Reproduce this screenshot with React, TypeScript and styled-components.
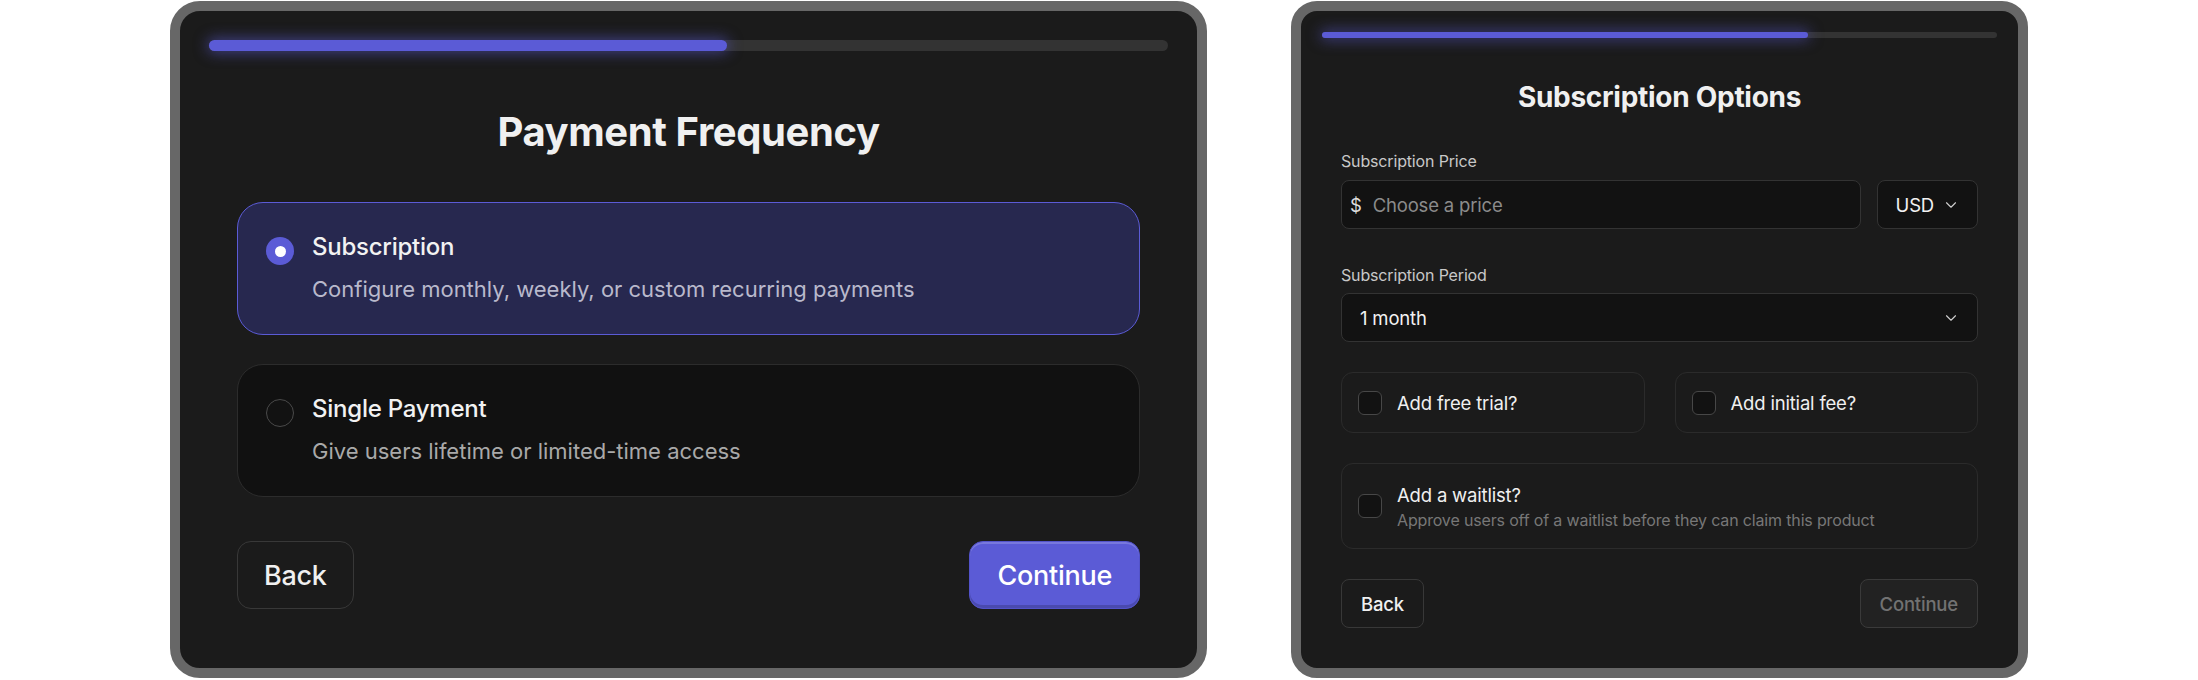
import styled, { createGlobalStyle } from "styled-components";
import { ChevronDown } from "lucide-react";

const GlobalStyle = createGlobalStyle`
  * { box-sizing: border-box; }
  body {
    margin: 0;
    background: #ffffff;
    font-family: Inter, "Noto Sans", sans-serif;
    color: #f1f1f1;
  }
`;

const Page = styled.div`
  display: flex;
  justify-content: center;
  align-items: flex-start;
  gap: 84px;
  padding-top: 1px;
  height: 680px;
`;

const Frame = styled.div<{ $width: number; $radius: number; $pad: string }>`
  width: ${({ $width }) => $width}px;
  height: 677px;
  border: 10px solid #676767;
  border-radius: ${({ $radius }) => $radius}px;
  background: #1b1b1b;
  padding: ${({ $pad }) => $pad};
  display: flex;
  flex-direction: column;
`;

const Track = styled.div<{ $h: number }>`
  height: ${({ $h }) => $h}px;
  border-radius: ${({ $h }) => $h}px;
  background: #333333;
  flex-shrink: 0;
`;

const Fill = styled.div`
  height: 100%;
  border-radius: inherit;
  background: #5b5bd6;
  box-shadow: 0 0 14px 2px rgba(91, 91, 214, 0.55);
`;

const Body = styled.div<{ $px: number }>`
  padding: 0 ${({ $px }) => $px}px;
  display: flex;
  flex-direction: column;
`;

const Title = styled.h1<{ $size: number; $lh: number; $mt: number }>`
  margin: ${({ $mt }) => $mt}px 0 0;
  font-size: ${({ $size }) => $size}px;
  line-height: ${({ $lh }) => $lh}px;
  font-weight: 700;
  letter-spacing: -0.01em;
  text-align: center;
  color: #f0f0f0;
`;

/* ---------- left: payment frequency ---------- */

const Options = styled.div`
  margin-top: 46px;
  display: flex;
  flex-direction: column;
  gap: 29px;
`;

const Option = styled.div<{ $active?: boolean }>`
  display: flex;
  align-items: flex-start;
  gap: 18px;
  padding: 28px 28px 30px;
  border-radius: 26px;
  border: 1px solid ${({ $active }) => ($active ? "#5b5bd6" : "#2c2c2c")};
  background: ${({ $active }) => ($active ? "#27284f" : "#111111")};
`;

const Radio = styled.span<{ $on?: boolean }>`
  width: 28px;
  height: 28px;
  margin-top: 6px;
  border-radius: 50%;
  flex-shrink: 0;
  display: flex;
  align-items: center;
  justify-content: center;
  background: ${({ $on }) => ($on ? "#5b5bd6" : "#121212")};
  border: ${({ $on }) => ($on ? "none" : "1.5px solid #4a4a4a")};

  &::after {
    content: "";
    display: ${({ $on }) => ($on ? "block" : "none")};
    width: 11px;
    height: 11px;
    border-radius: 50%;
    background: #ffffff;
  }
`;

const OptionTitle = styled.div`
  font-size: 24px;
  line-height: 32px;
  font-weight: 500;
  letter-spacing: -0.01em;
  color: #f2f2f2;
`;

const OptionDesc = styled.div<{ $active?: boolean }>`
  margin-top: 11px;
  font-size: 22px;
  line-height: 30px;
  color: ${({ $active }) => ($active ? "#b9b9cc" : "#a9a9a9")};
`;

const Footer = styled.div<{ $mt: number }>`
  margin-top: ${({ $mt }) => $mt}px;
  display: flex;
  justify-content: space-between;
`;

const Button = styled.button<{ $size: number; $h: number; $px: number; $r: number; $variant?: "primary" | "ghost" | "disabled" }>`
  height: ${({ $h }) => $h}px;
  padding: 0 ${({ $px }) => $px}px;
  border-radius: ${({ $r }) => $r}px;
  font-family: inherit;
  font-size: ${({ $size }) => $size}px;
  font-weight: 500;
  letter-spacing: -0.01em;
  cursor: pointer;
  ${({ $variant }) =>
    $variant === "primary"
      ? `
    background: #5b5bd6;
    color: #ffffff;
    border: 1px solid #5353c9;
    box-shadow: inset 0 2px 0 rgba(255,255,255,0.18), inset 0 -3px 0 rgba(0,0,0,0.18);
  `
      : $variant === "disabled"
      ? `
    background: #222222;
    color: #727272;
    border: 1px solid #3a3a3a;
  `
      : `
    background: transparent;
    color: #f0f0f0;
    border: 1px solid #383838;
  `}
`;

/* ---------- right: subscription options ---------- */

const Form = styled.div`
  margin-top: 37px;
  display: flex;
  flex-direction: column;
`;

const Field = styled.div<{ $mt?: number }>`
  margin-top: ${({ $mt = 0 }) => $mt}px;
  display: flex;
  flex-direction: column;
`;

const Label = styled.label<{ $gap: number }>`
  font-size: 16px;
  line-height: 20px;
  color: #c8c8c8;
  letter-spacing: -0.01em;
  margin-bottom: ${({ $gap }) => $gap}px;
`;

const InputRow = styled.div`
  display: flex;
  gap: 16px;
`;

const Control = styled.div<{ $grow?: boolean }>`
  height: 49px;
  border: 1px solid #333333;
  border-radius: 8px;
  background: #121212;
  display: flex;
  align-items: center;
  font-size: 18.5px;
  letter-spacing: -0.01em;
  ${({ $grow }) => ($grow ? "flex: 1;" : "")}
`;

const PriceInput = styled(Control)`
  padding-left: 8px;
  gap: 11px;
`;

const Dollar = styled.span`
  color: #dddddd;
`;

const Placeholder = styled.span`
  color: #8b8b8b;
`;

const Select = styled(Control)<{ $pl: number; $pr: number }>`
  padding: 0 ${({ $pr }) => $pr}px 0 ${({ $pl }) => $pl}px;
  justify-content: space-between;
  gap: 8px;
  color: #f2f2f2;

  svg {
    color: #cfcfcf;
    flex-shrink: 0;
  }
`;

const CheckGrid = styled.div`
  margin-top: 30px;
  display: grid;
  grid-template-columns: 1fr 1fr;
  gap: 30px;
`;

const CheckCard = styled.div<{ $h: number; $mt?: number }>`
  height: ${({ $h }) => $h}px;
  margin-top: ${({ $mt = 0 }) => $mt}px;
  border: 1px solid #2b2b2b;
  border-radius: 12px;
  padding: 0 16px;
  display: flex;
  align-items: center;
  gap: 15px;
`;

const Checkbox = styled.span`
  width: 24px;
  height: 24px;
  border-radius: 6px;
  border: 1.5px solid #474747;
  background: #121212;
  flex-shrink: 0;
`;

const CheckText = styled.div`
  display: flex;
  flex-direction: column;
`;

const CheckTitle = styled.span`
  font-size: 18.5px;
  line-height: 24px;
  color: #f0f0f0;
  letter-spacing: -0.01em;
`;

const CheckDesc = styled.span`
  margin-top: 3px;
  font-size: 16px;
  line-height: 20px;
  color: #777777;
  letter-spacing: -0.01em;
`;

export default function App() {
  return (
    <>
      <GlobalStyle />
      <Page>
        <Frame $width={1037} $radius={30} $pad="29px">
          <Track $h={11}>
            <Fill style={{ width: "54%" }} />
          </Track>
          <Body $px={28}>
            <Title $size={40} $lh={48} $mt={57}>
              Payment Frequency
            </Title>
            <Options>
              <Option $active>
                <Radio $on />
                <div>
                  <OptionTitle>Subscription</OptionTitle>
                  <OptionDesc $active>Configure monthly, weekly, or custom recurring payments</OptionDesc>
                </div>
              </Option>
              <Option>
                <Radio />
                <div>
                  <OptionTitle>Single Payment</OptionTitle>
                  <OptionDesc>Give users lifetime or limited-time access</OptionDesc>
                </div>
              </Option>
            </Options>
            <Footer $mt={44}>
              <Button $size={27} $h={68} $px={26} $r={14}>
                Back
              </Button>
              <Button $size={27} $h={68} $px={27} $r={14} $variant="primary">
                Continue
              </Button>
            </Footer>
          </Body>
        </Frame>

        <Frame $width={737} $radius={26} $pad="21px 21px 40px">
          <Track $h={6}>
            <Fill style={{ width: "72%" }} />
          </Track>
          <Body $px={19}>
            <Title $size={28} $lh={34} $mt={42}>
              Subscription Options
            </Title>
            <Form>
              <Field>
                <Label $gap={9}>Subscription Price</Label>
                <InputRow>
                  <PriceInput $grow>
                    <Dollar>$</Dollar>
                    <Placeholder>Choose a price</Placeholder>
                  </PriceInput>
                  <Select $pl={18} $pr={17}>
                    USD
                    <ChevronDown size={18} strokeWidth={1.5} />
                  </Select>
                </InputRow>
              </Field>
              <Field $mt={36}>
                <Label $gap={8}>Subscription Period</Label>
                <Select $pl={18} $pr={17}>
                  1 month
                  <ChevronDown size={18} strokeWidth={1.5} />
                </Select>
              </Field>
              <CheckGrid>
                <CheckCard $h={61}>
                  <Checkbox />
                  <CheckTitle>Add free trial?</CheckTitle>
                </CheckCard>
                <CheckCard $h={61}>
                  <Checkbox />
                  <CheckTitle>Add initial fee?</CheckTitle>
                </CheckCard>
              </CheckGrid>
              <CheckCard $h={86} $mt={30}>
                <Checkbox />
                <CheckText>
                  <CheckTitle>Add a waitlist?</CheckTitle>
                  <CheckDesc>Approve users off of a waitlist before they can claim this product</CheckDesc>
                </CheckText>
              </CheckCard>
            </Form>
            <Footer $mt={30}>
              <Button $size={18.5} $h={49} $px={19} $r={8}>
                Back
              </Button>
              <Button $size={18.5} $h={49} $px={19} $r={8} $variant="disabled">
                Continue
              </Button>
            </Footer>
          </Body>
        </Frame>
      </Page>
    </>
  );
}
